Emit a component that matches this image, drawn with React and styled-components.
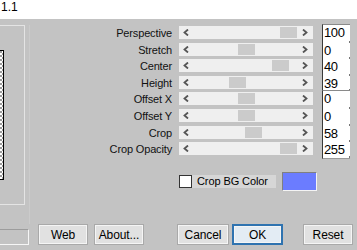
import React from "react";
import styled, { createGlobalStyle } from "styled-components";

const GlobalStyle = createGlobalStyle`
  html, body {
    margin: 0;
    padding: 0;
    background: #c3c3c3;
  }
`;

const Window = styled.div`
  width: 357px;
  height: 250px;
  overflow: hidden;
  background: #c3c3c3;
  font-family: "Liberation Sans", Arial, sans-serif;
  font-size: 11px;
  color: #000;
  display: flex;
  flex-direction: column;
`;

const TitleBar = styled.div`
  height: 19px;
  flex: none;
  background: #ffffff;
  font-size: 12px;
  line-height: 14px;
  padding-left: 1px;
`;

const Main = styled.div`
  display: flex;
  flex-direction: row;
  height: 205px;
  flex: none;
`;

const LeftPane = styled.div`
  margin-top: 6px;
  width: 24px;
  height: 178px;
  border: 1px solid #e4e4e4;
  border-left: 0;
  flex: none;
`;

const Preview = styled.div`
  margin-top: 24px;
  width: 3px;
  height: 128px;
  border: 1px solid #000;
  border-left: 0;
  background: repeating-conic-gradient(#ffffff 0 25%, #9a9a9a 0 50%) 0 0 / 4px 4px;
`;

const Divider = styled.div`
  margin-left: 4px;
  margin-top: 6px;
  width: 1px;
  height: 199px;
  background: #cbcbcb;
  flex: none;
`;

const Controls = styled.div`
  flex: 1;
  display: flex;
  flex-direction: column;
`;

const SliderGrid = styled.div`
  margin-top: 7px;
  display: grid;
  grid-template-columns: 142px 134px 30px;
  column-gap: 7px;
  grid-auto-rows: 16.6px;
`;

const Label = styled.div`
  text-align: right;
  line-height: 14px;
  white-space: nowrap;
  letter-spacing: -0.15px;
  color: #111;
`;

const Track = styled.div`
  position: relative;
  height: 13px;
  background: #efefef;
`;

const Thumb = styled.div`
  position: absolute;
  top: 1px;
  width: 17px;
  height: 11px;
  background: #cbcbcb;
`;

const Arrow = styled.svg`
  position: absolute;
  top: 3px;
  ${(p) => (p.$side === "left" ? "left: 4px;" : "right: 5px;")}
`;

const ValueCell = styled.div`
  margin-left: 2px;
  margin-top: ${(p) => (p.$first ? "-2px" : "0")};
  height: ${(p) => (p.$first ? "18.6px" : "16.6px")};
  box-sizing: border-box;
  background: #ffffff;
  border-left: 1px solid #3a3a3a;
  border-top: ${(p) => (p.$first ? "1px solid #8a8a8a" : "0")};
  border-bottom: ${(p) => (p.$last ? "1px solid #9a9a9a" : "0")};
  font-size: 13px;
  line-height: 15px;
  padding-left: 1px;
  letter-spacing: -0.4px;
  position: relative;
  &::after {
    content: "";
    position: absolute;
    right: 0;
    bottom: 0;
    width: 1px;
    height: 2px;
    background: #777;
  }
`;

const OptionRow = styled.div`
  margin-top: 13px;
  margin-left: 149px;
  display: flex;
  align-items: center;
`;

const CheckLabel = styled.label`
  display: flex;
  align-items: center;
  height: 13px;
  background: #d6d6d6;
  padding-right: 8px;
  font-size: 11px;
  letter-spacing: -0.1px;
`;

const CheckBox = styled.span`
  width: 11px;
  height: 11px;
  border: 1px solid #333;
  background: #fff;
  margin-right: 5px;
`;

const Swatch = styled.div`
  margin-left: 6px;
  width: 33px;
  height: 17px;
  background: #6b7cff;
  border: 1px solid #808080;
  border-right-color: #f4f4f4;
  border-bottom-color: #f4f4f4;
`;

const BottomBar = styled.div`
  display: flex;
  align-items: flex-end;
  height: 21px;
`;

const Field = styled.div`
  width: 29px;
  height: 16px;
  box-sizing: border-box;
  border: 1px solid #9c9c9c;
  border-left: 0;
  border-right-color: #f6f6f6;
  border-bottom-color: #f6f6f6;
`;

const Button = styled.button`
  box-sizing: border-box;
  width: ${(p) => p.$w || 50}px;
  height: 21px;
  margin-left: ${(p) => p.$gap}px;
  padding: 0;
  font-family: "Liberation Sans", Arial, sans-serif;
  font-size: 12px;
  letter-spacing: -0.1px;
  color: #000;
  background: ${(p) => (p.$default ? "#e3ecf4" : "#e1e1e1")};
  border: ${(p) => (p.$default ? "2px solid #2f73b0" : "1px solid #a9a9a9")};
  box-shadow: inset 0 0 0 1px #f5f5f5;
  outline: none;
`;

const sliders = [
  { label: "Perspective", value: "100", pos: 101 },
  { label: "Stretch", value: "0", pos: 59 },
  { label: "Center", value: "40", pos: 93 },
  { label: "Height", value: "39", pos: 50 },
  { label: "Offset X", value: "0", pos: 59 },
  { label: "Offset Y", value: "0", pos: 59 },
  { label: "Crop", value: "58", pos: 66 },
  { label: "Crop Opacity", value: "255", pos: 101 },
];

function Chevron({ side }) {
  return (
    <Arrow $side={side} width="6" height="7" viewBox="0 0 6 7">
      <path
        d={side === "left" ? "M5 0.5 L1.5 3.5 L5 6.5" : "M1 0.5 L4.5 3.5 L1 6.5"}
        fill="none"
        stroke="#555"
        strokeWidth="1.8"
      />
    </Arrow>
  );
}

export default function App() {
  return (
    <>
      <GlobalStyle />
      <Window>
        <TitleBar>1.1</TitleBar>
        <Main>
          <LeftPane>
            <Preview />
          </LeftPane>
          <Divider />
          <Controls>
            <SliderGrid>
              {sliders.map((s, i) => (
                <React.Fragment key={s.label}>
                  <Label>{s.label}</Label>
                  <Track>
                    <Chevron side="left" />
                    <Thumb style={{ left: s.pos }} />
                    <Chevron side="right" />
                  </Track>
                  <ValueCell $first={i === 0 || i === 4} $last={i === 3 || i === 7}>
                    {s.value}
                  </ValueCell>
                </React.Fragment>
              ))}
            </SliderGrid>
            <OptionRow>
              <CheckLabel>
                <CheckBox />
                Crop BG Color
              </CheckLabel>
              <Swatch />
            </OptionRow>
          </Controls>
        </Main>
        <BottomBar>
          <Field />
          <Button $gap={9}>Web</Button>
          <Button $gap={6}>About...</Button>
          <Button $gap={33} $w={52}>Cancel</Button>
          <Button $gap={3} $w={51} $default>OK</Button>
          <Button $gap={20}>Reset</Button>
        </BottomBar>
      </Window>
    </>
  );
}
